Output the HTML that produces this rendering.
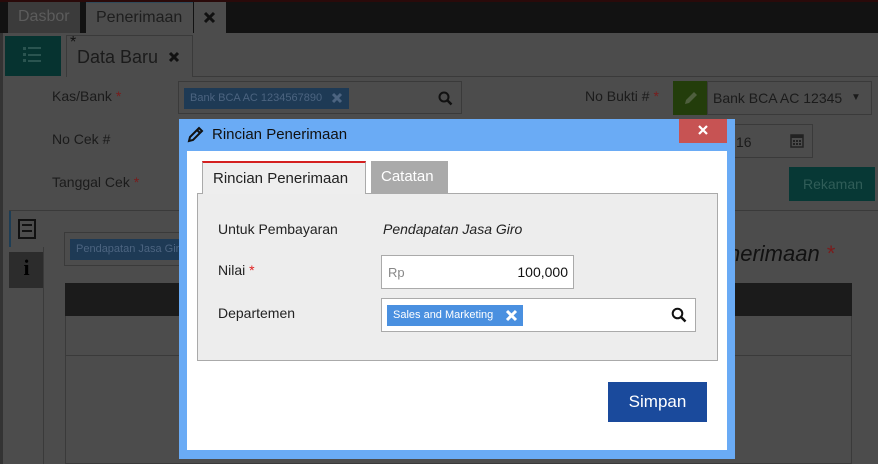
<!DOCTYPE html>
<html><head><style>
*{box-sizing:border-box;margin:0;padding:0}
body{width:878px;height:464px;overflow:hidden;background:#4c4c4c;font-family:"Liberation Sans",sans-serif;position:relative}
.a{position:absolute}
.t{font-size:14px;color:#1b1b1b}
.st{color:#7a1c1c}
</style></head><body>
<div class="a" style="left:0;top:0;width:878px;height:33px;background:#121212;border-top:2px solid #2a0a0a"></div>
<div class="a" style="left:8px;top:2px;width:72px;height:31px;background:#3b3b3b;color:#5c5c5c;font-size:16px;padding:6px 0 0 10px">Dasbor</div>
<div class="a" style="left:86px;top:2px;width:107px;height:31px;background:#4c4c4c;color:#1e1e1e;font-size:16px;padding:6px 0 0 10px;border-top:1px solid #2f4a5a">Penerimaan</div>
<div class="a" style="left:194px;top:2px;width:32px;height:31px;background:#4c4c4c"></div>
<svg class="a" style="left:203px;top:11px" width="13" height="13"><path d="M2 2L11 11M11 2L2 11" stroke="#111" stroke-width="3"/></svg>
<div class="a" style="left:0;top:33px;width:3px;height:431px;background:#333"></div>
<div class="a" style="left:5px;top:36px;width:56px;height:40px;background:#063330"></div>
<svg class="a" style="left:23px;top:46px" width="20" height="18"><g fill="#2a5450"><rect x="0" y="1" width="3" height="3"/><rect x="5" y="1" width="13" height="2"/><rect x="0" y="7" width="3" height="3"/><rect x="5" y="8" width="13" height="2"/><rect x="0" y="13" width="3" height="3"/><rect x="5" y="14" width="13" height="2"/></g></svg>
<div class="a" style="left:66px;top:35px;width:127px;height:42px;border:1px solid #3a3a3a;border-bottom:none;background:#4c4c4c;font-size:18px;color:#1b1b1b;padding:11px 0 0 10px">Data Baru</div>
<svg class="a" style="left:168px;top:51px" width="12" height="12"><path d="M2 2L10 10M10 2L2 10" stroke="#111" stroke-width="3"/></svg>
<div class="a" style="left:70px;top:34px;font-size:16px;color:#111">*</div>
<div class="a" style="left:193px;top:76px;width:685px;height:1px;background:#3a3a3a"></div>
<div class="a t" style="left:52px;top:88px">Kas/Bank <span class="st">*</span></div>
<div class="a t" style="left:52px;top:131px">No Cek #</div>
<div class="a t" style="left:52px;top:174px">Tanggal Cek <span class="st">*</span></div>
<div class="a" style="left:178px;top:81px;width:284px;height:33px;border:1px solid #3a3a3a"></div>
<div class="a" style="left:184px;top:88px;width:165px;height:21px;background:#1e3a55;color:#4c6480;font-size:11px;padding:4px 0 0 6px;white-space:nowrap">Bank BCA AC 1234567890</div>
<svg class="a" style="left:331px;top:92px" width="12" height="12"><path d="M2 2L10 10M10 2L2 10" stroke="#4c6480" stroke-width="3"/></svg>
<svg class="a" style="left:438px;top:91px" width="15" height="15"><circle cx="6" cy="6" r="4.5" stroke="#111" stroke-width="2" fill="none"/><path d="M9.5 9.5L13.5 13.5" stroke="#111" stroke-width="2.5"/></svg>
<div class="a t" style="left:585px;top:88px">No Bukti # <span class="st">*</span></div>
<div class="a" style="left:673px;top:81px;width:35px;height:34px;background:#233d0b"></div>
<svg class="a" style="left:683px;top:90px" width="16" height="16"><path d="M2 14L3 10L11 2L14 5L6 13Z" fill="#4f5f3e"/></svg>
<div class="a" style="left:707px;top:81px;width:165px;height:34px;border:1px solid #3a3a3a;font-size:14px;color:#1b1b1b;padding:8px 0 0 5px;overflow:hidden;white-space:nowrap">Bank BCA AC 123456 <span style="position:absolute;right:0;top:0;width:28px;height:32px;background:#4c4c4c;font-size:10px;padding:10px 0 0 8px">▼</span></div>
<div class="a" style="left:727px;top:124px;width:86px;height:34px;border:1px solid #3a3a3a;font-size:14px;color:#1b1b1b;padding:9px 0 0 8px">16</div>
<svg class="a" style="left:790px;top:133px" width="14" height="15"><rect x="1" y="2" width="12" height="12" fill="none" stroke="#222" stroke-width="1.5"/><rect x="1" y="2" width="12" height="3" fill="#222"/><g fill="#222"><rect x="3" y="7" width="2" height="2"/><rect x="6" y="7" width="2" height="2"/><rect x="9" y="7" width="2" height="2"/><rect x="3" y="10" width="2" height="2"/><rect x="6" y="10" width="2" height="2"/><rect x="9" y="10" width="2" height="2"/></g></svg>
<div class="a" style="left:789px;top:167px;width:86px;height:34px;background:#073835;color:#305d58;font-size:14px;padding:9px 0 0 14px">Rekaman</div>
<div class="a" style="left:9px;top:210px;width:869px;height:1px;background:#3a3a3a"></div>
<div class="a" style="left:9px;top:211px;width:35px;height:36px;border-left:2px solid #1d3d55;background:#4c4c4c"></div>
<div class="a" style="left:18px;top:219px;width:18px;height:20px;border:2px solid #111;background:#4c4c4c"><div style="margin:3px 2px;height:8px;border-top:2px solid #111;border-bottom:2px solid #111"></div></div>
<div class="a" style="left:9px;top:252px;width:35px;height:36px;background:#2c2c2c;color:#000;font-weight:bold;font-size:22px;text-align:center;font-family:'Liberation Serif',serif;padding-top:3px">i</div>
<div class="a" style="left:43px;top:247px;width:1px;height:217px;background:#3a3a3a"></div>
<div class="a" style="left:64px;top:232px;width:130px;height:34px;border:1px solid #3a3a3a"></div>
<div class="a" style="left:70px;top:239px;width:120px;height:21px;background:#1e3a55;color:#4c6480;font-size:11px;padding:4px 0 0 6px;white-space:nowrap;overflow:hidden">Pendapatan Jasa Giro</div>
<div class="a" style="left:728px;top:241px;font-size:22px;font-style:italic;color:#111">nerimaan <span class="st">*</span></div>
<div class="a" style="left:65px;top:283px;width:787px;height:181px;border:1px solid #3a3a3a"></div>
<div class="a" style="left:65px;top:283px;width:787px;height:33px;background:#1b1b1b"></div>
<div class="a" style="left:66px;top:355px;width:786px;height:1px;background:#3a3a3a"></div>

<div class="a" style="left:179px;top:119px;width:556px;height:340px;background:#6aabf5"></div>
<svg class="a" style="left:187px;top:126px" width="17" height="17"><path d="M2 15L3 11L12 2L15 5L6 14Z" fill="none" stroke="#111" stroke-width="2"/><path d="M10 4L13 7" stroke="#111" stroke-width="2"/></svg>
<div class="a" style="left:212px;top:126px;font-size:15px;color:#111">Rincian Penerimaan</div>
<div class="a" style="left:679px;top:119px;width:48px;height:24px;background:#c75353"></div>
<svg class="a" style="left:698px;top:125px" width="10" height="10"><path d="M1 1L9 9M9 1L1 9" stroke="#fff" stroke-width="2.2"/></svg>
<div class="a" style="left:187px;top:151px;width:540px;height:299px;background:#fff"></div>
<div class="a" style="left:202px;top:161px;width:164px;height:33px;background:#eee;border:1px solid #aaa;border-top:2px solid #d42020;border-bottom:none;font-size:15px;color:#222;padding:7px 0 0 10px;z-index:2">Rincian Penerimaan</div>
<div class="a" style="left:371px;top:161px;width:77px;height:32px;background:#aaa;color:#fff;font-size:15px;padding:7px 0 0 10px">Catatan</div>
<div class="a" style="left:197px;top:193px;width:521px;height:168px;background:#ededed;border:1px solid #aaa"></div>
<div class="a" style="left:218px;top:221px;font-size:14px;color:#222">Untuk Pembayaran</div>
<div class="a" style="left:383px;top:221px;font-size:14px;color:#222;font-style:italic">Pendapatan Jasa Giro</div>
<div class="a" style="left:218px;top:262px;font-size:14px;color:#222">Nilai <span style="color:#e02020">*</span></div>
<div class="a" style="left:381px;top:255px;width:193px;height:34px;background:#fff;border:1px solid #aaa;font-size:13px"><span style="position:absolute;left:6px;top:9px;color:#888">Rp</span><span style="position:absolute;right:5px;top:8px;color:#111;font-size:14px">100,000</span></div>
<div class="a" style="left:218px;top:305px;font-size:14px;color:#222">Departemen</div>
<div class="a" style="left:381px;top:298px;width:315px;height:34px;background:#fff;border:1px solid #aaa"></div>
<div class="a" style="left:387px;top:305px;width:136px;height:21px;background:#4a90e0;color:#fff;font-size:11px;padding:4px 0 0 6px;white-space:nowrap">Sales and Marketing</div>
<svg class="a" style="left:505px;top:309px" width="13" height="13"><path d="M2 2L11 11M11 2L2 11" stroke="#fff" stroke-width="3"/></svg>
<svg class="a" style="left:671px;top:307px" width="16" height="16"><circle cx="6.5" cy="6.5" r="4.8" stroke="#111" stroke-width="2" fill="none"/><path d="M10 10L14.5 14.5" stroke="#111" stroke-width="2.5"/></svg>
<div class="a" style="left:608px;top:382px;width:99px;height:40px;background:#1a4a9c;color:#fff;font-size:17px;text-align:center;padding-top:10px">Simpan</div>
</body></html>
